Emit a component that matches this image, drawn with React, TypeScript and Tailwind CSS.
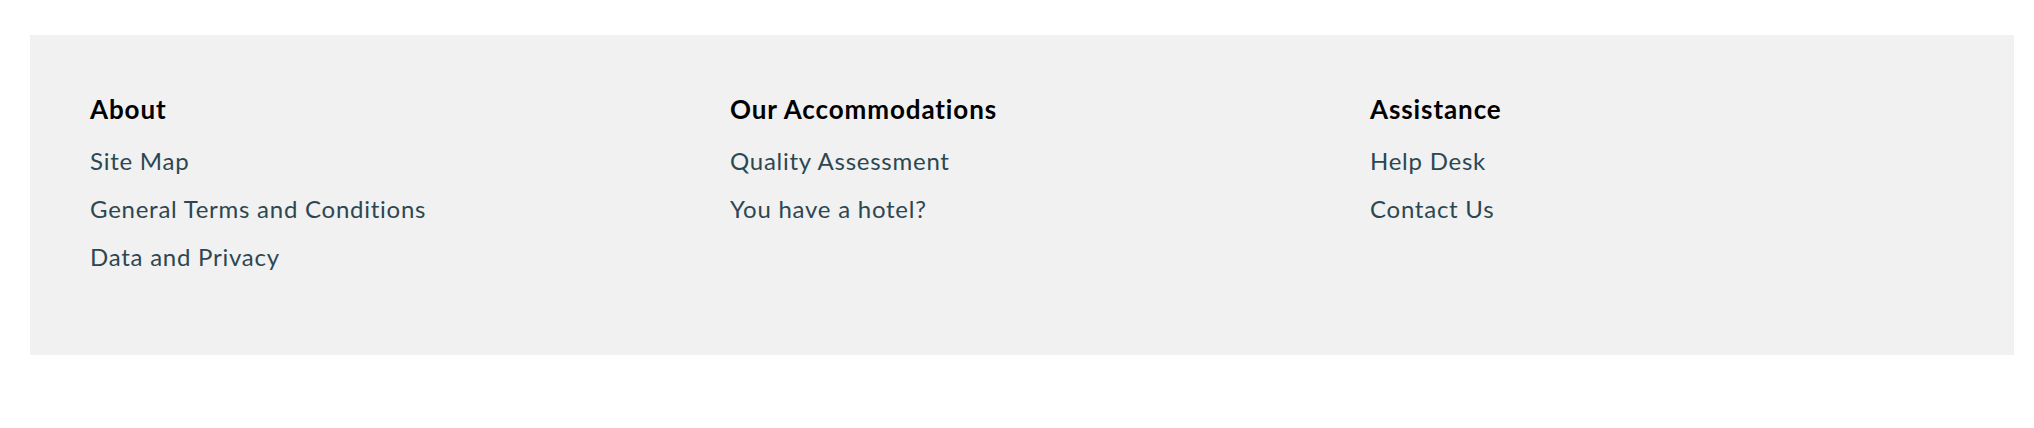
import React from 'react';

const columns = [
  { title: 'About', links: ['Site Map', 'General Terms and Conditions', 'Data and Privacy'] },
  { title: 'Our Accommodations', links: ['Quality Assessment', 'You have a hotel?'] },
  { title: 'Assistance', links: ['Help Desk', 'Contact Us'] },
];

export default function App() {
  return (
    <div className="w-[2034px] h-[428px] bg-white pt-[35px] pl-[30px] font-['Lato',sans-serif]">
      <footer className="w-[1984px] h-[320px] bg-[#f1f1f1] pl-[60px] pt-[59px]">
        <div className="grid grid-cols-[640px_640px_1fr]">
          {columns.map((col) => (
            <div key={col.title}>
              <h4 className="text-[26px] leading-[30px] font-bold tracking-[0.9px] text-black mb-[13px]">{col.title}</h4>
              <ul>
                {col.links.map((link) => (
                  <li key={link}>
                    <a href="#" className="block text-[24px] leading-[48px] tracking-[0.75px] text-[#2c4751]">
                      {link}
                    </a>
                  </li>
                ))}
              </ul>
            </div>
          ))}
        </div>
      </footer>
    </div>
  );
}
